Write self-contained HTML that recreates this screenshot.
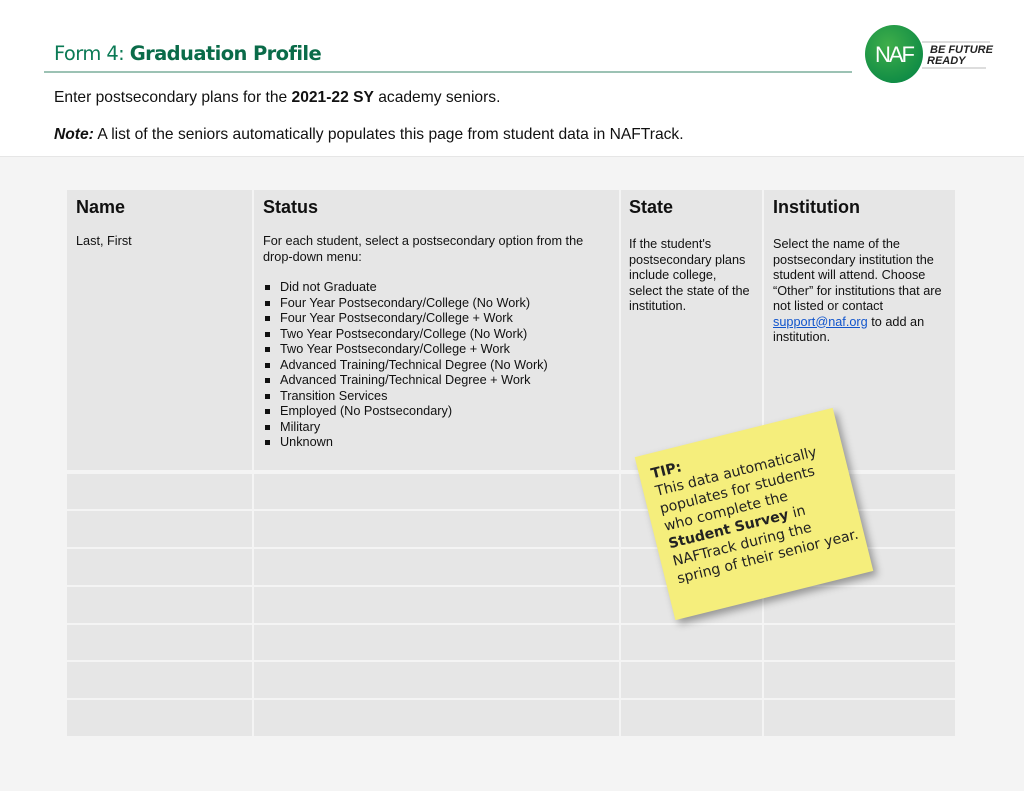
<!DOCTYPE html>
<html><head><meta charset="utf-8"><style>
*{margin:0;padding:0;box-sizing:border-box}
body{width:1024px;height:791px;overflow:hidden;background:#f4f4f4;font-family:"Liberation Sans",Arial,sans-serif;position:relative}
.top{position:absolute;left:0;top:0;width:1024px;height:157px;background:#fff;border-bottom:1px solid #e6e6e6}
.title{position:absolute;left:54px;top:42px;font-size:19.5px;color:#0b7a55;font-family:"DejaVu Sans",sans-serif;letter-spacing:-0.6px}
.title b{color:#0a6b49}
.rule{position:absolute;left:44px;top:71px;width:808px;height:2px;background:#9cc2b4}
.p1{position:absolute;left:54px;top:89px;font-size:15.6px;color:#111}
.p2{position:absolute;left:54px;top:126px;font-size:15.6px;color:#111}
.cell{position:absolute;background:#e6e6e6;font-size:12.7px;color:#111;line-height:15.5px}
.cell h3{font-size:18px;font-weight:bold;margin:0 0 17px;line-height:20px}
ul{list-style:none;margin-top:15px}
li{padding-left:17px;position:relative}
li:before{content:"";position:absolute;left:2px;top:5px;width:5px;height:5px;background:#111}
a{color:#1155cc;text-decoration:underline}
.note{position:absolute;left:652px;top:430px;width:204px;height:168px;background:#f5ee7c;transform:rotate(-14deg);box-shadow:3px 5px 8px rgba(0,0,0,.35);font-family:"DejaVu Sans",sans-serif;font-size:14.1px;line-height:18px;color:#222;padding:12px 0 0 12px;white-space:nowrap}
</style></head><body>
<div class="top"></div>
<div class="title">Form 4: <b>Graduation Profile</b></div>
<div class="rule"></div>
<svg style="position:absolute;left:864px;top:25px" width="130" height="60">
<defs><radialGradient id="g" cx="40%" cy="35%" r="70%"><stop offset="0" stop-color="#3fae4a"/><stop offset="1" stop-color="#0d8a45"/></radialGradient></defs>
<line x1="58" y1="17" x2="126" y2="17" stroke="#bbb" stroke-width="1"/>
<line x1="58" y1="43" x2="122" y2="43" stroke="#bbb" stroke-width="1"/>
<circle cx="30" cy="29" r="29" fill="url(#g)"/>
<text x="30" y="37" font-family="Liberation Sans" font-size="22" fill="#fff" text-anchor="middle" letter-spacing="-2">NAF</text>
<text x="66" y="28" font-family="Liberation Sans" font-weight="bold" font-style="italic" font-size="11" fill="#222">BE FUTURE</text>
<text x="63" y="39" font-family="Liberation Sans" font-weight="bold" font-style="italic" font-size="11" fill="#222">READY</text>
</svg>
<div class="p1">Enter postsecondary plans for the <b>2021-22 SY</b> academy seniors.</div>
<div class="p2"><b><i>Note:</i></b> A list of the seniors automatically populates this page from student data in NAFTrack.</div>

<div class="cell" style="left:67px;top:190px;width:185px;height:280px;padding:7px 9px"><h3>Name</h3>Last, First</div>
<div class="cell" style="left:254px;top:190px;width:365px;height:280px;padding:7px 9px"><h3>Status</h3>For each student, select a postsecondary option from the drop-down menu:
<ul><li>Did not Graduate</li><li>Four Year Postsecondary/College (No Work)</li><li>Four Year Postsecondary/College + Work</li><li>Two Year Postsecondary/College (No Work)</li><li>Two Year Postsecondary/College + Work</li><li>Advanced Training/Technical Degree (No Work)</li><li>Advanced Training/Technical Degree + Work</li><li>Transition Services</li><li>Employed (No Postsecondary)</li><li>Military</li><li>Unknown</li></ul></div>
<div class="cell" style="left:621px;top:190px;width:141px;height:280px;padding:7px 8px"><h3 style="margin-bottom:20px">State</h3>If the student's<br>postsecondary plans<br>include college,<br>select the state of the<br>institution.</div>
<div class="cell" style="left:764px;top:190px;width:191px;height:280px;padding:7px 9px"><h3 style="margin-bottom:20px">Institution</h3>Select the name of the postsecondary institution the student will attend. Choose “Other” for institutions that are not listed or contact <a>support@naf.org</a> to add an institution.</div>

<div id="rows"></div>
<script>
var tops=[474,511,549,587,625,662,700],h=[35,36,36,36,35,36,36];
var cols=[[67,185],[254,365],[621,141],[764,191]],s='';
tops.forEach(function(t,i){cols.forEach(function(c){s+='<div class="cell" style="left:'+c[0]+'px;top:'+t+'px;width:'+c[1]+'px;height:'+h[i]+'px"></div>';});});
document.getElementById('rows').innerHTML=s;
</script>
<div class="note"><b>TIP:</b><br>This data automatically<br>populates for students<br>who complete the<br><b>Student Survey</b> in<br>NAFTrack during the<br>spring of their senior year.</div>
</body></html>
